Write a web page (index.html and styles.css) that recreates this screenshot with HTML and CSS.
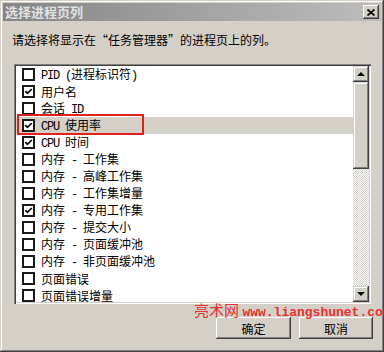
FILE: index.html
```html
<!DOCTYPE html>
<html>
<head>
<meta charset="utf-8">
<link rel="stylesheet" href="styles.css">
</head>
<body>
<div class="dialog">
  <div class="titlebar">
    <span class="title">选择进程页列</span>
    <span class="close"><svg width="8" height="7" viewBox="0 0 8 7"><path d="M0.5 0.5 L7.5 6.5 M7.5 0.5 L0.5 6.5" stroke="#000" stroke-width="1.7" fill="none"/></svg></span>
  </div>
  <p class="prompt">请选择将显示在“任务管理器”的进程页上的列。</p>
  <div class="listbox">
    <ul class="items">
      <li><span class="cb"></span><span class="label"><span class="en">PID (</span>进程标识符<span class="en">)</span></span></li>
      <li><span class="cb on"><svg width="9" height="9" viewBox="0 0 9 9"><path d="M1.3 4.2 L3.5 6.4 L7.8 2" stroke="#000" stroke-width="1.7" fill="none"/></svg></span><span class="label">用户名</span></li>
      <li><span class="cb"></span><span class="label">会话<span class="en"> ID</span></span></li>
      <li class="sel"><span class="cb on"><svg width="9" height="9" viewBox="0 0 9 9"><path d="M1.3 4.2 L3.5 6.4 L7.8 2" stroke="#000" stroke-width="1.7" fill="none"/></svg></span><span class="label"><span class="en">CPU </span>使用率</span><span class="mark"></span></li>
      <li><span class="cb on"><svg width="9" height="9" viewBox="0 0 9 9"><path d="M1.3 4.2 L3.5 6.4 L7.8 2" stroke="#000" stroke-width="1.7" fill="none"/></svg></span><span class="label"><span class="en">CPU </span>时间</span></li>
      <li><span class="cb"></span><span class="label">内存<span class="en"> - </span>工作集</span></li>
      <li><span class="cb"></span><span class="label">内存<span class="en"> - </span>高峰工作集</span></li>
      <li><span class="cb"></span><span class="label">内存<span class="en"> - </span>工作集增量</span></li>
      <li><span class="cb on"><svg width="9" height="9" viewBox="0 0 9 9"><path d="M1.3 4.2 L3.5 6.4 L7.8 2" stroke="#000" stroke-width="1.7" fill="none"/></svg></span><span class="label">内存<span class="en"> - </span>专用工作集</span></li>
      <li><span class="cb"></span><span class="label">内存<span class="en"> - </span>提交大小</span></li>
      <li><span class="cb"></span><span class="label">内存<span class="en"> - </span>页面缓冲池</span></li>
      <li><span class="cb"></span><span class="label">内存<span class="en"> - </span>非页面缓冲池</span></li>
      <li><span class="cb"></span><span class="label">页面错误</span></li>
      <li><span class="cb"></span><span class="label">页面错误增量</span></li>
    </ul>
    <div class="scrollbar">
      <div class="sb-btn"><span class="tri-up"></span></div>
      <div class="thumb"></div>
      <div class="track"></div>
      <div class="sb-btn"><span class="tri-down"></span></div>
    </div>
  </div>
  <div class="buttons">
    <span class="btn ok">确定</span>
    <span class="btn cancel">取消</span>
  </div>
  <div class="watermark">亮术网 <span class="url">www.liangshunet.com</span></div>
</div>
</body>
</html>
```
FILE: styles.css
```css
html, body {
  margin: 0;
  padding: 0;
  background: #d4d0c8;
}
.dialog {
  position: relative;
  width: 384px;
  height: 352px;
  box-sizing: border-box;
  padding: 3px;
  background: #d4d0c8;
  overflow: hidden;
  font-family: "Noto Sans CJK SC", sans-serif;
  font-size: 12px;
  color: #000;
  box-shadow: inset -1px -1px #404040, inset 1px 1px #d4d0c8, inset -2px -2px #808080, inset 2px 2px #fff;
}
.titlebar {
  height: 18px;
  display: flex;
  align-items: center;
  justify-content: space-between;
  padding: 0 2px;
  background: linear-gradient(to right, #858585, #bdbdbd);
}
.title {
  font-size: 13px;
  font-weight: bold;
  color: #e2e2e2;
  line-height: 18px;
}
.close {
  width: 16px;
  height: 14px;
  box-sizing: border-box;
  display: flex;
  align-items: center;
  justify-content: center;
  background: #d4d0c8;
  box-shadow: inset -1px -1px #404040, inset 1px 1px #fff, inset -2px -2px #808080, inset 2px 2px #d4d0c8;
}
.prompt {
  margin: 11px 0 16px 9px;
  line-height: 16px;
  font-size: 12px;
}
.listbox {
  margin-left: 11px;
  width: 357px;
  height: 240px;
  box-sizing: border-box;
  padding: 2px;
  display: flex;
  box-shadow: inset 1px 1px #808080, inset 2px 2px #404040, inset -1px -1px #fff, inset -2px -2px #d4d0c8;
}
.items {
  flex: 1;
  margin: 0;
  padding: 0;
  list-style: none;
  background: #fff;
  overflow: hidden;
}
.items li {
  position: relative;
  height: 17px;
  display: flex;
  align-items: center;
  padding-left: 6px;
  white-space: nowrap;
}
.items li.sel {
  background: #d4d0c8;
}
.cb {
  width: 13px;
  height: 13px;
  box-sizing: border-box;
  border: 2px solid #1a1a1a;
  background: #fff;
  margin-right: 6px;
  display: flex;
  align-items: center;
  justify-content: center;
  flex: none;
}
.cb svg {
  display: block;
}
.label {
  line-height: 17px;
  font-size: 12px;
}
.en {
  font-family: "Liberation Mono", monospace;
  font-size: 12px;
  letter-spacing: -1.2px;
  white-space: pre;
}
.mark {
  position: absolute;
  left: 1px;
  top: -3px;
  width: 127px;
  height: 21px;
  box-sizing: border-box;
  border: 2px solid #e0201c;
}
.scrollbar {
  width: 16px;
  display: flex;
  flex-direction: column;
}
.sb-btn {
  height: 16px;
  flex: none;
  display: flex;
  align-items: center;
  justify-content: center;
  background: #d4d0c8;
  box-shadow: inset -1px -1px #404040, inset 1px 1px #d4d0c8, inset -2px -2px #808080, inset 2px 2px #fff;
}
.thumb {
  height: 87px;
  flex: none;
  background: #d4d0c8;
  box-shadow: inset -1px -1px #404040, inset 1px 1px #d4d0c8, inset -2px -2px #808080, inset 2px 2px #fff;
}
.track {
  flex: 1;
  background: repeating-conic-gradient(#fff 0 25%, #d4d0c8 0 50%) 0 0 / 2px 2px;
}
.tri-up {
  width: 0;
  height: 0;
  border-left: 4px solid transparent;
  border-right: 4px solid transparent;
  border-bottom: 4px solid #000;
}
.tri-down {
  width: 0;
  height: 0;
  border-left: 4px solid transparent;
  border-right: 4px solid transparent;
  border-top: 4px solid #000;
}
.buttons {
  margin-top: 13px;
  display: flex;
  justify-content: flex-end;
  gap: 8px;
  padding-right: 8px;
}
.btn {
  height: 22px;
  box-sizing: border-box;
  display: flex;
  align-items: center;
  justify-content: center;
  background: #d4d0c8;
  font-size: 12px;
  box-shadow: inset -1px -1px #404040, inset 1px 1px #fff, inset -2px -2px #808080, inset 2px 2px #d4d0c8;
}
.ok { width: 75px; }
.cancel { width: 74px; }
.watermark {
  position: absolute;
  left: 194px;
  top: 301px;
  line-height: 18px;
  font-size: 15px;
  color: #e53030;
  white-space: nowrap;
}
.url {
  font-family: "Liberation Mono", monospace;
  font-size: 13px;
  font-weight: bold;
}
```
